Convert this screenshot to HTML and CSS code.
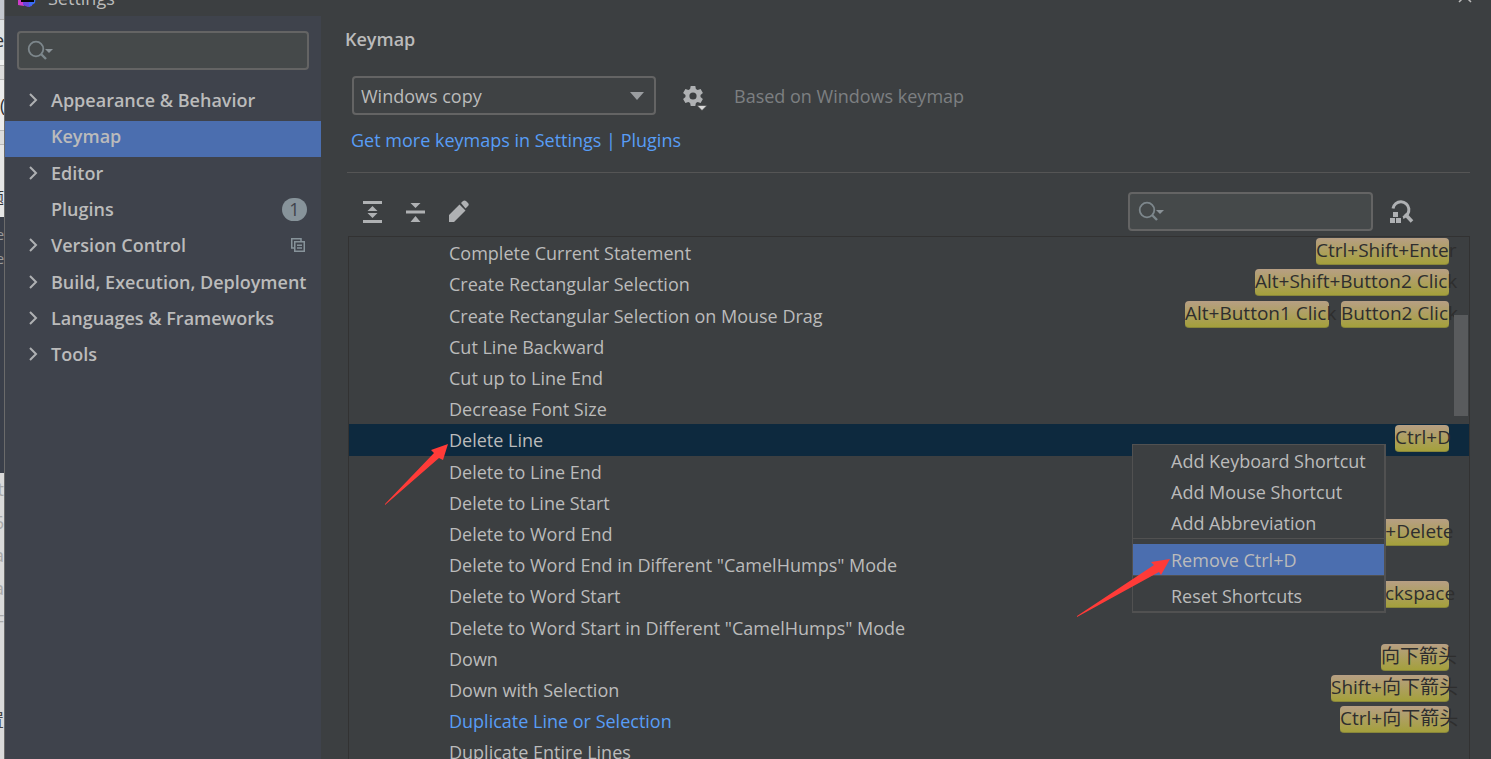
FILE: index.html
```html
<!DOCTYPE html>
<html lang="en">
<head>
<meta charset="utf-8">
<title>Settings</title>
<link rel="stylesheet" href="styles.css">
</head>
<body>
<div class="backdrop" aria-hidden="true">
  <div class="slice slice-tab"></div>
  <div class="slice slice-bar">e</div>
  <div class="slice slice-rule"></div>
  <div class="slice slice-icon">(</div>
  <div class="slice slice-rule slice-rule-short"></div>
  <div class="slice slice-page">题</div>
  <div class="slice slice-code"><span>e</span><span>e</span></div>
  <div class="slice slice-doc"><span>t</span><span>6</span><span>a</span><span>a</span><span>F</span><b>置</b></div>
</div>
<div class="dialog">
  <header class="titlebar">
    <svg class="app-icon" width="20" height="20" viewBox="0 0 20 20" aria-hidden="true">
      <path d="M0 0h6v19l-6-1z" fill="#d03cc8"/><path d="M0 0h3v12H0z" fill="#f58a2c"/><path d="M5 14h9v5l-4 1-5-2z" fill="#6b45e0"/><path d="M12 0h7l-2 16-6 4z" fill="#3b6cf2"/><path d="M3 2h13v13H3z" fill="#050505"/><path d="M5 12h5v1H5z" fill="#fff"/>
    </svg>
    <span class="title">Settings</span>
    <button class="close" type="button" aria-label="Close"><svg width="16" height="16" viewBox="0 0 16 16"><path d="M2 2l12 12M14 2L2 14" stroke="#bbb" stroke-width="1.5"/></svg></button>
  </header>
  <div class="body">
    <aside class="sidebar">
      <label class="search">
        <svg width="28" height="22" viewBox="0 0 28 22" aria-hidden="true"><circle cx="9" cy="9" r="7.3" fill="none" stroke="#7d878c" stroke-width="1.8"/><path d="M14 14l5 5" stroke="#7d878c" stroke-width="2.4"/><path d="M18 9h8l-4 4z" fill="#8a9297"/></svg>
        <input type="text" aria-label="Search settings">
      </label>
      <nav class="tree">
        <a href="#appearance"><svg class="chevron" viewBox="0 0 10 16"><path d="M1 2l6 6-6 6"/></svg>Appearance &amp; Behavior</a>
        <a href="#keymap" class="active" aria-current="page"><span class="chevron"></span>Keymap</a>
        <a href="#editor"><svg class="chevron" viewBox="0 0 10 16"><path d="M1 2l6 6-6 6"/></svg>Editor</a>
        <a href="#plugins"><span class="chevron"></span>Plugins<span class="count">1</span></a>
        <a href="#vcs"><svg class="chevron" viewBox="0 0 10 16"><path d="M1 2l6 6-6 6"/></svg>Version Control
          <svg class="project" width="14" height="14" viewBox="0 0 14 14"><path d="M3 10H.75V.75H10V3" fill="none" stroke="#87939a" stroke-width="1.5"/><path d="M3.75 3.75h9.5v9.5h-9.5zM6 7.2h5M6 10h5" fill="none" stroke="#87939a" stroke-width="1.5"/></svg></a>
        <a href="#build"><svg class="chevron" viewBox="0 0 10 16"><path d="M1 2l6 6-6 6"/></svg>Build, Execution, Deployment</a>
        <a href="#languages"><svg class="chevron" viewBox="0 0 10 16"><path d="M1 2l6 6-6 6"/></svg>Languages &amp; Frameworks</a>
        <a href="#tools"><svg class="chevron" viewBox="0 0 10 16"><path d="M1 2l6 6-6 6"/></svg>Tools</a>
      </nav>
    </aside>
    <main class="content">
      <h1>Keymap</h1>
      <div class="scheme">
        <div class="select">
          <select aria-label="Keymap scheme"><option>Windows copy</option></select>
          <svg width="14" height="8" viewBox="0 0 14 8" aria-hidden="true"><path d="M0 0h14L7 8z" fill="#9a9da0"/></svg>
        </div>
        <button class="icon gear" type="button" aria-label="Scheme actions">
          <svg width="24" height="26" viewBox="0 0 24 26"><path fill="#afb1b3" fill-rule="evenodd" d="M7.7 1h4.6l.6 3.1 1.7 1 3-1.1 2.3 4-2.4 2a8 8 0 0 1 0 2l2.4 2-2.3 4-3-1.1-1.7 1-.6 3.1H7.7l-.6-3.1-1.700-1-3 1.100-2.300-4 2.400-2a8 8 0 0 1 0-2L.1 8l2.300-4 3 1.100 1.700-1zM10 7.400a3.600 3.600 0 1 0 0 7.200 3.600 3.600 0 0 0 0-7.200z"/><path d="M14 20.500h10l-5 5z" fill="#d8d8d8" stroke="#3c3f41" stroke-width=".6"/></svg>
        </button>
        <span class="based">Based on Windows keymap</span>
      </div>
      <a class="more" href="#marketplace">Get more keymaps in Settings | Plugins</a>
      <hr>
      <div class="toolbar">
        <button class="icon" type="button" aria-label="Expand all"><svg width="20" height="24" viewBox="0 0 20 24"><path d="M0 1h19v3H0zM0 20h19v3H0zM9.500 6l5 5h-10zM9.500 18l5-5h-10z" fill="#afb1b3"/></svg></button>
        <button class="icon" type="button" aria-label="Collapse all"><svg width="20" height="24" viewBox="0 0 20 24"><path d="M0 10.500h19v3H0zM4.500 3h10l-5 5zM4.500 22h10l-5-6z" fill="#afb1b3"/></svg></button>
        <button class="icon" type="button" aria-label="Edit shortcut"><svg width="22" height="24" viewBox="0 0 22 24"><path d="M-1 22v-6L10.500 4.500l6 6L5 22zM12 3l2-2q1.500-1 3 0l2 2q1.500 1.500 0 3l-2.500 2.500z" fill="#afb1b3"/></svg></button>
        <label class="search">
          <svg width="28" height="22" viewBox="0 0 28 22" aria-hidden="true"><circle cx="9" cy="9" r="7.3" fill="none" stroke="#7d878c" stroke-width="1.8"/><path d="M14 14l5 5" stroke="#7d878c" stroke-width="2.4"/><path d="M18 9h8l-4 4z" fill="#8a9297"/></svg>
          <input type="text" aria-label="Search actions">
        </label>
        <button class="icon" type="button" aria-label="Find by shortcut"><svg width="26" height="24" viewBox="0 0 26 24"><path d="M4 8.500a8 8 0 1 1 10 9" fill="none" stroke="#afb1b3" stroke-width="3"/><path d="M16 14l7 7.500" stroke="#afb1b3" stroke-width="3.600"/><path d="M4 12h5v5H4zM1 18h5v5H1zM7 18h5v5H7z" fill="#afb1b3"/></svg></button>
      </div>
      <div class="actions">
        <ul>
          <li><span>Complete Current Statement</span><kbd style="width:133px">Ctrl+Shift+Enter</kbd></li>
          <li><span>Create Rectangular Selection</span><kbd style="width:194px">Alt+Shift+Button2 Click</kbd></li>
          <li><span>Create Rectangular Selection on Mouse Drag</span><kbd style="width:144px">Alt+Button1 Click</kbd><kbd style="width:108px">Button2 Click</kbd></li>
          <li><span>Cut Line Backward</span></li>
          <li><span>Cut up to Line End</span></li>
          <li><span>Decrease Font Size</span></li>
          <li class="selected"><span>Delete Line</span><kbd style="width:54px">Ctrl+D</kbd></li>
          <li><span>Delete to Line End</span></li>
          <li><span>Delete to Line Start</span></li>
          <li><span>Delete to Word End</span><kbd style="width:95px">Ctrl+Delete</kbd></li>
          <li><span>Delete to Word End in Different "CamelHumps" Mode</span></li>
          <li><span>Delete to Word Start</span><kbd style="width:129px">Ctrl+Backspace</kbd></li>
          <li><span>Delete to Word Start in Different "CamelHumps" Mode</span></li>
          <li><span>Down</span><kbd style="width:68px">向下箭头</kbd></li>
          <li><span>Down with Selection</span><kbd style="width:118px">Shift+向下箭头</kbd></li>
          <li class="changed"><span>Duplicate Line or Selection</span><kbd style="width:109px">Ctrl+向下箭头</kbd></li>
          <li><span>Duplicate Entire Lines</span></li>
        </ul>
        <div class="thumb"></div>
        <div class="menu" role="menu">
          <button type="button" role="menuitem">Add Keyboard Shortcut</button>
          <button type="button" role="menuitem">Add Mouse Shortcut</button>
          <button type="button" role="menuitem">Add Abbreviation</button>
          <div class="sep"></div>
          <button type="button" role="menuitem" class="hover">Remove Ctrl+D</button>
          <div class="sep"></div>
          <button type="button" role="menuitem">Reset Shortcuts</button>
        </div>
        <svg class="arrow arrow-row" width="66" height="64" viewBox="0 0 66 64" aria-hidden="true"><path d="M64 1L47 7l3 3L1 61v1l54-47 4 2z"/></svg>
        <svg class="arrow arrow-menu" width="96" height="62" viewBox="0 0 96 62" aria-hidden="true"><path d="M94 2L75 5l3 3L1 59v1l82-45 2 3z"/></svg>
      </div>
    </main>
  </div>
</div>
</body>
</html>
```
FILE: styles.css
```css
* { box-sizing: border-box; }

body {
  margin: 0;
  height: 100vh;
  display: flex;
  overflow: hidden;
  background: #3c3f41;
  color: #bbbbbb;
  font: 18px/24px "Open Sans", "Noto Sans CJK SC", sans-serif;
}

button, input, select { font: inherit; color: inherit; }
a { color: inherit; text-decoration: none; }
svg { display: block; flex: none; }

/* sliver of the window behind the dialog */
.backdrop {
  width: 5px;
  flex: none;
  display: flex;
  flex-direction: column;
  overflow: hidden;
  background: #dcdcdc;
  border-right: 1px solid #6b6b6b;
  color: #333;
}
.slice { flex: none; overflow: hidden; display: flex; align-items: center; justify-content: flex-end; }
.slice-tab { height: 20px; background: #c4c8cf; border-bottom: 1px solid #aaa; }
.slice-bar { height: 45px; background: #dfe2e4; border-bottom: 5px solid #f0f0f0; }
.slice-rule { height: 15px; background: #dcdcdc; border-top: 1px solid #b8b8b8; border-bottom: 1px solid #b8b8b8; }
.slice-icon { height: 50px; background: #ececec; justify-content: flex-start; }
.slice-page { height: 72px; background: #e6e6e6; padding-top: 34px; font-size: 16px; }
.slice-code { height: 256px; background: #3a3f4a; color: #9a9a9a; flex-direction: column; justify-content: flex-start; align-items: flex-end; padding-top: 6px; font-size: 14px; }
.slice-doc { flex: 1; color: #aaa; flex-direction: column; justify-content: flex-start; align-items: flex-end; padding-top: 4px; background: #dadada; }
.slice-doc span { height: 33px; flex: none; }
.slice-doc b { margin-top: 66px; color: #444; font-weight: 400; }

.dialog { flex: 1; min-width: 0; display: flex; flex-direction: column; }
.titlebar { height: 16px; flex: none; display: flex; align-items: flex-end; padding: 0 18px 0 13px; }
.app-icon { margin-bottom: 9px; }
.title { margin: 0 auto 6px 10px; }
.close { padding: 0; border: 0; background: none; margin-bottom: 12px; }
.body { flex: 1; min-height: 0; display: flex; }

.sidebar { width: 316px; flex: none; background: #3f434c; padding-top: 15px; }
.search {
  height: 39px;
  display: flex;
  align-items: center;
  padding: 0 8px;
  border: 2px solid #646464;
  border-radius: 4px;
  background: #45494a;
}
.search input { flex: 1; min-width: 0; border: 0; outline: 0; background: none; }
.sidebar .search { margin: 0 12px 15px; }

.tree a { display: flex; align-items: center; height: 36px; padding: 0 14px 6px 24px; font-weight: 600; white-space: nowrap; }
.tree a:nth-child(3n) { height: 37px; }
.tree .active { background: #4b6eaf; }
.chevron { width: 10px; height: 16px; margin-right: 12px; flex: none; fill: none; stroke: #afb1b3; stroke-width: 2; }
.count { margin-left: auto; width: 25px; height: 23px; border-radius: 12px; background: #87939a; color: #3f434c; font-weight: 400; line-height: 23px; text-align: center; }
.project { margin: 0 2px 0 auto; }

.content { flex: 1; min-width: 0; display: flex; flex-direction: column; padding: 11px 21px 0 26px; }
h1 { margin: 0 0 25px -2px; font-size: 18px; line-height: 24px; font-weight: 600; }
.scheme { display: flex; align-items: center; padding-left: 5px; }
.select { display: grid; align-items: center; width: 304px; }
.select select, .select svg { grid-area: 1 / 1; }
.select svg { justify-self: end; margin-right: 12px; pointer-events: none; }
.select select { appearance: none; height: 39px; padding: 0 30px 0 7px; border: 2px solid #646464; border-radius: 4px; background: #3f4244; outline: 0; }
.icon { display: block; padding: 0; border: 0; background: none; flex: none; }
.gear { margin: 4px 27px 0 27px; }
.based { color: #7d7f81; }
.more { margin: 13px 0 0 4px; color: #589df6; align-self: flex-start; }
hr { width: 100%; margin: 20px 0 19px; border: 0; border-top: 1px solid #555555; }

.toolbar { display: flex; align-items: center; gap: 23px; padding: 0 55px 0 16px; height: 39px; margin-bottom: 5px; }
.toolbar .search { width: 245px; margin-left: auto; margin-right: -7px; }

.actions { position: relative; flex: 1; min-height: 0; margin-left: 1px; border: 1px solid #323232; border-width: 1px 1px 0; }
.actions ul { height: 100%; overflow: hidden; margin: 0; padding: 0; list-style: none; }
.actions li { display: flex; height: 31px; padding: 0 20px 0 100px; gap: 12px; white-space: nowrap; }
.actions li:nth-child(5n + 2) { height: 32px; }
.actions li span { margin-right: auto; padding-top: 4px; }
.actions .selected { background: #0d293e; }
.actions .changed span { color: #589df6; }
kbd {
  height: 27px;
  margin-top: 1px;
  border-bottom: 1px solid #88863a;
  border-radius: 4px;
  background: linear-gradient(#b79f84, #a4a03c);
  color: #2e2e2e;
  font: 19px/25px "Open Sans", "Noto Sans CJK SC", sans-serif;
}
.thumb { position: absolute; top: 78px; right: 1px; width: 14px; height: 101px; background: #595b5d; }

.menu { position: absolute; top: 207px; right: 83px; width: 254px; border: 1px solid #515151; border-width: 1px 2px 2px 1px; background: #3c3f41; }
.menu button { display: block; width: 100%; height: 31px; padding: 0 0 0 38px; border: 0; background: none; text-align: left; white-space: nowrap; }
.menu .hover { background: #4b6eaf; }
.menu .sep { height: 6px; border-top: 1px solid #515151; }
.menu .hover + .sep { height: 5px; }

.arrow { position: absolute; fill: #ff3b38; }
.arrow-row { top: 206px; left: 35px; }
.arrow-menu { top: 320px; right: 297px; }
```
